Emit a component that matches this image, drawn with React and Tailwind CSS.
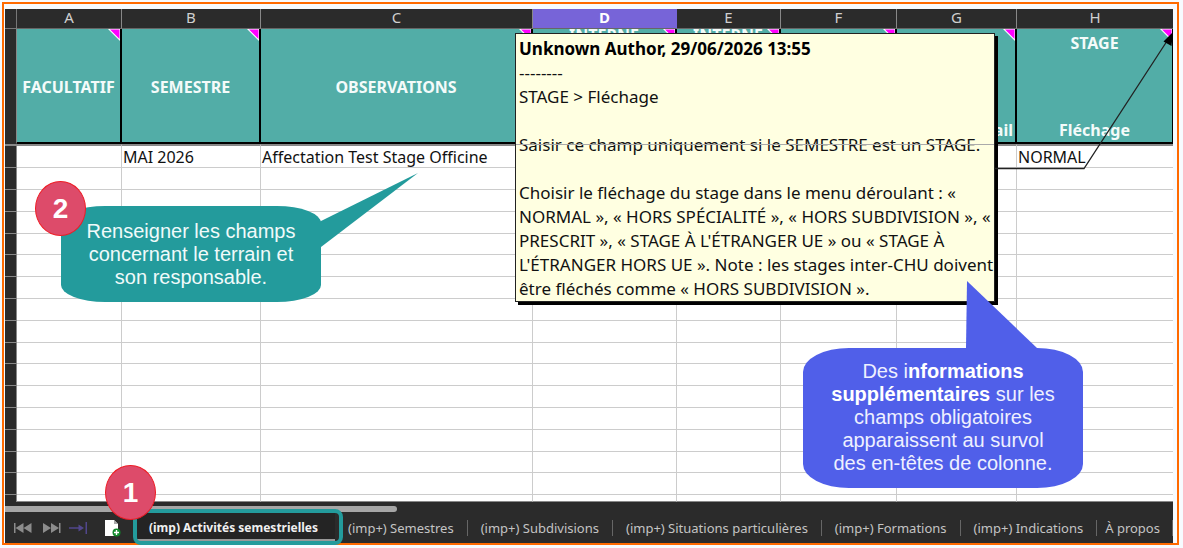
import React from "react";

const columns = [
  { id: "A", lines: ["FACULTATIF"], width: "w-[105px]" },
  { id: "B", lines: ["SEMESTRE"], width: "w-[139px]" },
  { id: "C", lines: ["OBSERVATIONS"], width: "w-[272px]" },
  { id: "D", lines: ["INTERNE"], width: "w-[144px]", top: true, active: true },
  { id: "E", lines: ["INTERNE"], width: "w-[104px]", top: true },
  { id: "F", lines: [], width: "w-[116px]" },
  { id: "G", lines: ["", "E-mail"], width: "w-[120px]", split: true },
  { id: "H", lines: ["STAGE", "Fléchage"], width: "", split: true },
];

const firstRow = ["", "MAI 2026", "Affectation Test Stage Officine", "", "", "", "", "NORMAL"];
const emptyRows = Array.from({ length: 15 }, (_, i) => i);

const tabs = [
  "(imp+) Semestres",
  "(imp+) Subdivisions",
  "(imp+) Situations particulières",
  "(imp+) Formations",
  "(imp+) Indications",
  "À propos",
];

function NoteMarker() {
  return (
    <svg className="absolute top-0 right-0 h-3 w-3" viewBox="0 0 12 12" aria-hidden="true">
      <path d="M0 0H12V12Z" fill="#fff" />
      <path d="M2 0.500H11.500V10Z" fill="#f0f" />
    </svg>
  );
}

function HeaderLabel({ column }) {
  if (column.split) {
    return (
      <div className="flex h-[113px] flex-col justify-between pt-1 pb-0.5">
        <span className="h-5">{column.lines[0]}</span>
        <span className={column.id === "G" ? "pr-0.5 text-right" : ""}>{column.lines[1]}</span>
      </div>
    );
  }
  return (
    <div className={`flex h-[113px] justify-center whitespace-nowrap ${column.top ? "items-start" : "items-center"}`}>
      <span className={column.top ? "leading-3" : "pt-0.5"}>{column.lines[0]}</span>
    </div>
  );
}

function Sheet() {
  return (
    <table className="w-full table-fixed border-separate border-spacing-0 bg-white text-[16px] leading-5 text-[#111]">
      <colgroup>
        <col className="w-3" />
        {columns.map((c) => (
          <col key={c.id} className={c.width} />
        ))}
      </colgroup>
      <thead>
        <tr className="h-5 bg-[#2b2b2b] text-[15px] text-[#d0d0d0]">
          <td className="border-r border-b border-[#777] p-0" />
          {columns.map((c) => (
            <th
              key={c.id}
              scope="col"
              className={`border-b border-[#666] p-0 align-top leading-[17px] last:border-r-0 ${
                c.active ? "border-r border-r-[#7764d8] bg-[#7764d8] font-bold text-white" : "border-r border-r-[#888] font-normal"
              }`}
            >
              {c.id}
            </th>
          ))}
        </tr>
        <tr className="text-[#f4fbfa]">
          <td className="border-r border-b-2 border-[#888] border-b-[#2b2b2b] bg-[#2b2b2b] p-0" />
          {columns.map((c) => (
            <th key={c.id} scope="col" className="relative border-r-2 border-b-2 border-black bg-[#52ada7] p-0 font-bold last:border-r">
              <HeaderLabel column={c} />
              <NoteMarker />
            </th>
          ))}
        </tr>
      </thead>
      <tbody className="[&>tr:nth-child(5n)]:h-[21px]">
        <tr className="h-6">
          <td className="border-t-2 border-r border-b border-[#888] bg-[#2b2b2b] p-0" />
          {firstRow.map((text, i) => (
            <td key={i} className="border-t-2 border-r border-b border-[#ccc] border-t-[#888] px-px py-0 whitespace-nowrap last:border-r-0">
              {text}
            </td>
          ))}
        </tr>
        {emptyRows.map((row) => (
          <tr key={row} className="h-[22px]">
            <td className="border-r border-b border-[#888] bg-[#2b2b2b] p-0" />
            {columns.map((c) => (
              <td key={c.id} className="border-r border-b border-[#ccc] p-0 last:border-r-0" />
            ))}
          </tr>
        ))}
        <tr className="h-[7px]">
          <td className="border-r border-[#888] bg-[#2b2b2b] p-0" />
          {columns.map((c) => (
            <td key={c.id} className="border-r border-b border-[#ccc] border-b-[#888] p-0 last:border-r-0" />
          ))}
        </tr>
      </tbody>
    </table>
  );
}

function Comment() {
  return (
    <aside className="absolute top-[24px] left-[510px] w-[480px] border border-[#222] bg-[#ffffe1] px-[3px] pt-[3px] text-[17px] leading-6 whitespace-nowrap text-[#111] shadow-[3px_3px_0_#000]">
      <p className="font-bold text-black">Unknown Author, 29/06/2026 13:55</p>
      <p>--------</p>
      <p>STAGE &gt; Fléchage</p>
      <br />
      <p>Saisir ce champ uniquement si le SEMESTRE est un STAGE.</p>
      <br />
      <p>
        Choisir le fléchage du stage dans le menu déroulant : «<br />
        NORMAL », « HORS SPÉCIALITÉ », « HORS SUBDIVISION », «<br />
        PRESCRIT », « STAGE À L'ÉTRANGER UE » ou « STAGE À<br />
        L'ÉTRANGER HORS UE ». Note : les stages inter-CHU doivent<br />
        être fléchés comme « HORS SUBDIVISION ».
      </p>
      <div className="absolute top-[110px] right-0 left-0 h-px bg-[#aaa]" />
    </aside>
  );
}

function CommentArrow() {
  return (
    <svg className="absolute top-[20px] left-[990px] h-[144px] w-[180px]" viewBox="0 0 180 144" aria-hidden="true">
      <path d="M0 139.500H89L174 9" fill="none" stroke="#222" strokeWidth="1.300" />
      <path d="M178 3L168.500 12.500L176.500 17Z" fill="#000" />
    </svg>
  );
}

function FieldsCallout() {
  return (
    <div className="absolute top-[197px] left-[56px] flex h-[96px] w-[260px] items-center justify-center rounded-[44px/17px] bg-[#239b9c] text-center font-['Liberation_Sans',sans-serif] text-[20px] leading-[23px] whitespace-nowrap text-[#f0fafa]">
      <svg className="absolute top-[-34px] left-[258px] h-[76px] w-[102px]" viewBox="0 0 102 76" fill="#239b9c" aria-hidden="true">
        <path d="M0 50L99 1L2 75H0Z" />
      </svg>
      <p>
        Renseigner les champs
        <br />
        concernant le terrain et
        <br />
        son responsable.
      </p>
    </div>
  );
}

function HeadersCallout() {
  return (
    <div className="absolute top-[339px] left-[798px] flex h-[140px] w-[280px] items-center justify-center rounded-[46px/24px] bg-[#505fe9] pb-0.5 text-center font-['Liberation_Sans',sans-serif] text-[20px] leading-[23px] whitespace-nowrap text-[#eef0ff]">
      <svg className="absolute top-[-68px] left-[163px] h-[70px] w-[74px]" viewBox="0 0 74 70" fill="#505fe9" aria-hidden="true">
        <path d="M0 70V68L1 1L71 68V70Z" />
      </svg>
      <p>
        Des i<b className="text-white">nformations</b>
        <br />
        <b className="text-white">supplémentaires</b> sur les
        <br />
        champs obligatoires
        <br />
        apparaissent au survol
        <br />
        des en-têtes de colonne.
      </p>
    </div>
  );
}

function Step({ children, className }) {
  return (
    <div
      className={`absolute flex h-[55px] w-[51px] items-center justify-center rounded-[50%] border border-[#ee1c25] bg-[#dd4b6a] font-['Liberation_Sans',sans-serif] text-[28px] font-bold text-white ${className}`}
    >
      {children}
    </div>
  );
}

function TabBar() {
  return (
    <nav className="flex h-[31px] items-center bg-[#2b2b2b] text-[13px] leading-5 whitespace-nowrap text-[#c4c4c4]">
      <button type="button" aria-label="Première feuille" className="ml-[9px] shrink-0">
        <svg className="block h-3 w-[18px]" viewBox="0 0 18 12" fill="#8c8c8c">
          <path d="M0 1h1.500v10H0zM9.500 1v10L1.500 6zM17.500 1v10L9.500 6z" />
        </svg>
      </button>
      <button type="button" aria-label="Dernière feuille" className="ml-[11px] shrink-0">
        <svg className="block h-3 w-[18px]" viewBox="0 0 18 12" fill="#8c8c8c">
          <path d="M16 1h1.500v10H16zM0 1v10l8-5zM8 1v10l8-5z" />
        </svg>
      </button>
      <button type="button" aria-label="Aller à la feuille" className="ml-2 shrink-0">
        <svg className="block h-3 w-[19px]" viewBox="0 0 19 12" fill="#51478c">
          <path d="M0 5.200h9.500V2.500L15 6l-5.500 3.500V6.800H0zM16.500 0H18v12h-1.500z" />
        </svg>
      </button>
      <button type="button" aria-label="Ajouter une feuille" className="ml-4 shrink-0">
        <svg className="block h-[18px] w-[18px]" viewBox="0 0 18 18">
          <path d="M1 1h9l4 4v12H1z" fill="#fff" />
          <path d="M10 1v4h4z" fill="#aaa" />
          <circle cx="12.500" cy="13.500" r="4" fill="#128a2c" />
          <path d="M12.500 11v5M10 13.500h5" stroke="#fff" strokeWidth="1.400" />
        </svg>
      </button>
      <button
        type="button"
        className="ml-[14px] h-[29px] w-[199px] shrink-0 self-start border-b-2 border-[#999] bg-[#242424] pt-1 pr-1 text-center text-[12px] font-bold text-[#f0f0f0]"
      >
        (imp) Activités semestrielles
      </button>
      {tabs.map((tab) => (
        <button key={tab} type="button" className="shrink-0 border-r border-[#666] px-[13px] leading-4 last:pr-3 last:pl-2">
          {tab}
        </button>
      ))}
    </nav>
  );
}

export default function App() {
  return (
    <main className="min-h-screen bg-[#f7fbff] pt-[2px] pr-1 pb-1 pl-[2px] font-['Noto_Sans',sans-serif]">
      <div className="border-2 border-[#ff6a00] pt-[5px] pr-1 pl-px">
        <div className="relative">
          <div className="overflow-hidden">
            <Sheet />
            <div className="bg-[#2b2b2b] pt-1">
              <div className="h-[6px] w-[392px] rounded-r-full bg-[#a6a6a6]" />
            </div>
            <TabBar />
          </div>
          <Comment />
          <CommentArrow />
          <FieldsCallout />
          <HeadersCallout />
          <div className="absolute top-[500px] left-[128px] h-[36px] w-[210px] rounded-[8px] border-4 border-[#239b9c]" />
          <Step className="top-[172px] left-[30px]">2</Step>
          <Step className="top-[456px] left-[100px]">1</Step>
        </div>
      </div>
    </main>
  );
}
